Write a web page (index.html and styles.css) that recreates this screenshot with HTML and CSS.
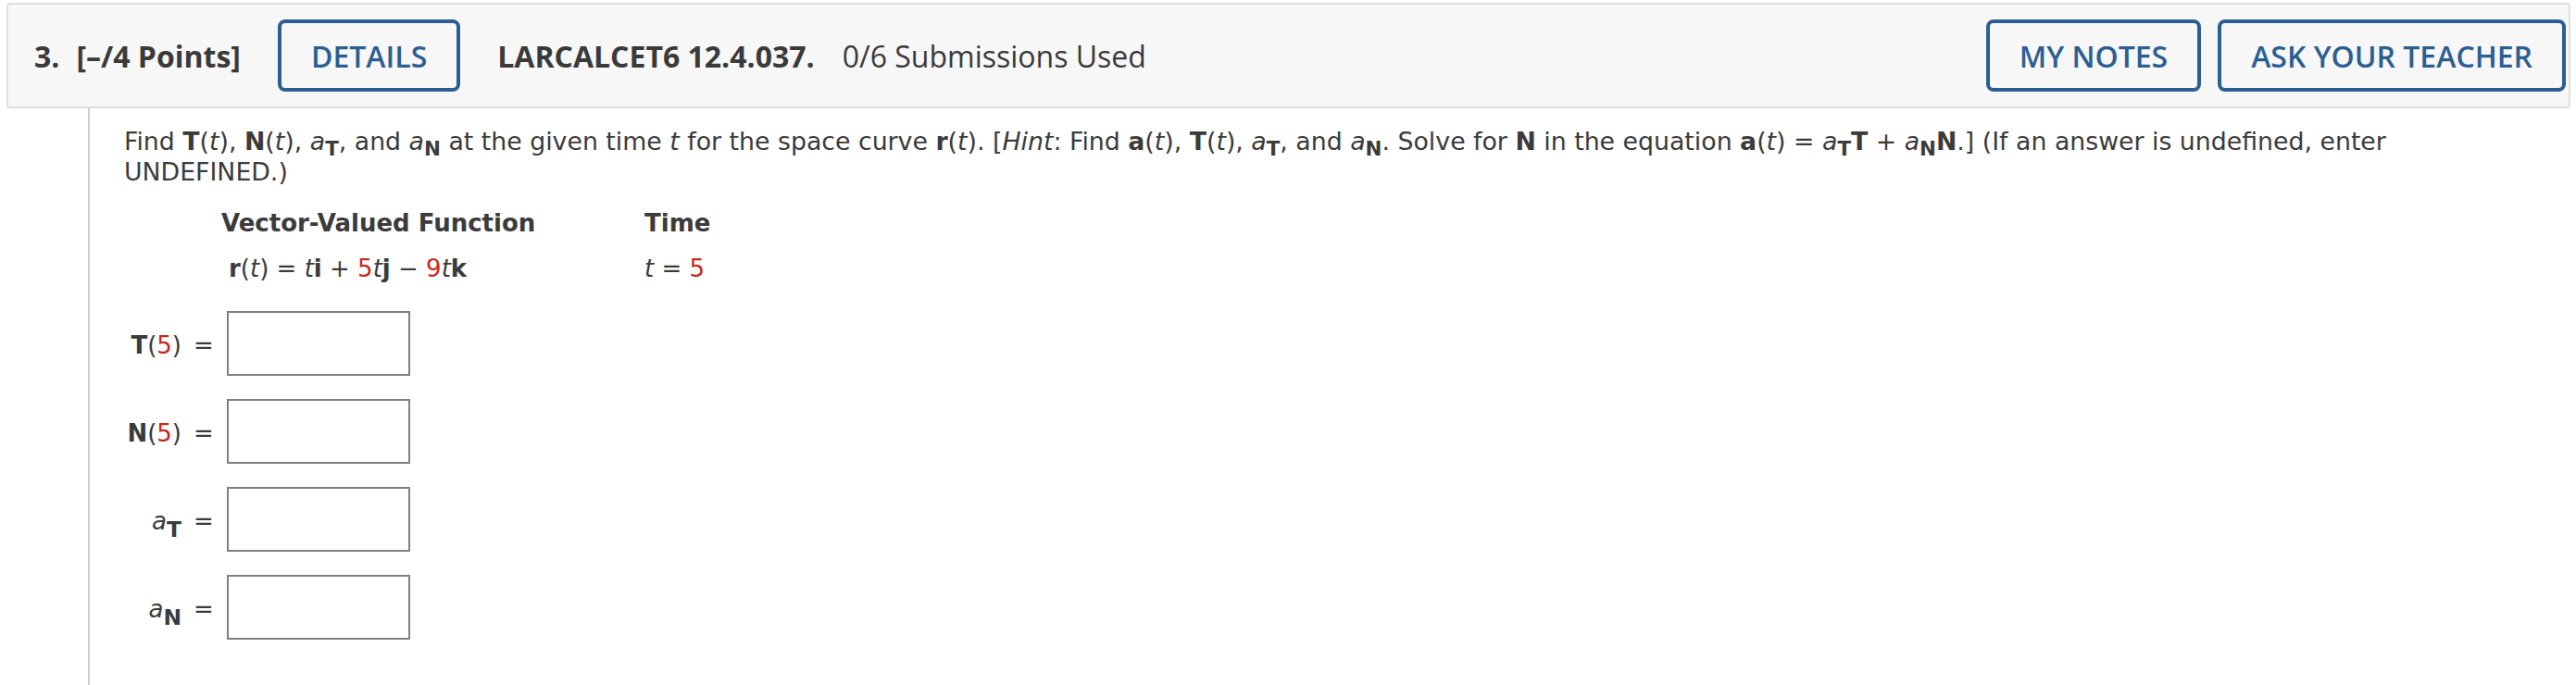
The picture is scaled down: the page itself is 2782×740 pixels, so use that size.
FILE: index.html
```html
<!DOCTYPE html>
<html lang="en">
<head>
<meta charset="utf-8">
<title>Question 3</title>
<link rel="stylesheet" href="styles.css">
</head>
<body>
<div class="question">
  <div class="q-header">
    <span class="q-num">3.</span>
    <span class="q-points">[–/4 Points]</span>
    <span class="btn btn-details">DETAILS</span>
    <span class="q-id">LARCALCET6 12.4.037.</span>
    <span class="q-subs">0/6 Submissions Used</span>
    <div class="q-actions">
      <span class="btn">MY NOTES</span>
      <span class="btn">ASK YOUR TEACHER</span>
    </div>
  </div>
  <div class="q-body">
    <p class="prompt">Find <b>T</b>(<i>t</i>), <b>N</b>(<i>t</i>), <i>a</i><sub>T</sub>, and <i>a</i><sub>N</sub> at the given time <i>t</i> for the space curve <b>r</b>(<i>t</i>). [<i>Hint</i>: Find <b>a</b>(<i>t</i>), <b>T</b>(<i>t</i>), <i>a</i><sub>T</sub>, and <i>a</i><sub>N</sub>. Solve for <b>N</b> in the equation <b>a</b>(<i>t</i>) = <i>a</i><sub>T</sub><b>T</b> + <i>a</i><sub>N</sub><b>N</b>.] (If an answer is undefined, enter UNDEFINED.)</p>
    <div class="vvf">
      <div class="vvf-head">Vector-Valued Function</div>
      <div class="vvf-head">Time</div>
      <div class="vvf-cell vvf-func"><b>r</b>(<i>t</i>) = <i>t</i><b>i</b> + <span class="red">5</span><i>t</i><b>j</b> − <span class="red">9</span><i>t</i><b>k</b></div>
      <div class="vvf-cell"><i>t</i> = <span class="red">5</span></div>
    </div>
    <div class="answers">
      <div class="ans-row">
        <span class="ans-label"><b>T</b>(<span class="red">5</span>)</span>
        <span class="ans-eq">=</span>
        <span class="ans-box"></span>
      </div>
      <div class="ans-row">
        <span class="ans-label"><b>N</b>(<span class="red">5</span>)</span>
        <span class="ans-eq">=</span>
        <span class="ans-box"></span>
      </div>
      <div class="ans-row">
        <span class="ans-label"><i>a</i><sub>T</sub></span>
        <span class="ans-eq">=</span>
        <span class="ans-box"></span>
      </div>
      <div class="ans-row">
        <span class="ans-label"><i>a</i><sub>N</sub></span>
        <span class="ans-eq">=</span>
        <span class="ans-box"></span>
      </div>
    </div>
  </div>
</div>
</body>
</html>
```
FILE: styles.css
```css
html, body {
  margin: 0;
  padding: 0;
  background: #ffffff;
}
body {
  height: 740px;
  overflow: hidden;
}
.question {
  padding: 3px 6px 0 7px;
}
.q-header {
  display: flex;
  align-items: center;
  height: 114px;
  box-sizing: border-box;
  background: #f7f7f7;
  border: 2px solid #e0e0e0;
  border-radius: 4px;
  padding: 0 3px 0 28px;
  font-family: "Open Sans", "Liberation Sans", sans-serif;
  font-size: 32px;
  color: #3a3a3a;
  white-space: nowrap;
}
.q-num {
  font-weight: 700;
}
.q-points {
  font-weight: 700;
  margin-left: 18px;
}
.btn {
  display: inline-flex;
  align-items: center;
  height: 78px;
  box-sizing: border-box;
  padding: 0 32px;
  border: 4px solid #2b5f93;
  border-radius: 8px;
  color: #2b5f93;
  font-weight: 600;
}
.btn-details {
  margin-left: 40px;
}
.q-id {
  font-weight: 700;
  margin-left: 40px;
}
.q-subs {
  margin-left: 30px;
}
.q-actions {
  margin-left: auto;
  display: flex;
  gap: 18px;
}
.q-body {
  margin-left: 88px;
  border-left: 2px solid #cccccc;
  min-height: 623px;
  padding: 19px 0 0 37px;
  font-family: "DejaVu Sans", Verdana, sans-serif;
  font-size: 26px;
  line-height: 31.6px;
  color: #3b3b3b;
}
.prompt {
  margin: 0;
  max-width: 2550px;
  font-size: 26.75px;
  line-height: 33px;
}
.prompt sub {
  font-weight: 700;
  font-size: 0.8em;
  vertical-align: -6px;
  line-height: 0;
}
.red {
  color: #c8281e;
}
.vvf {
  display: grid;
  grid-template-columns: 457px auto;
  margin: 15px 0 0 105px;
}
.vvf-head {
  font-weight: 700;
  padding: 8.7px 0;
}
.vvf-cell {
  padding: 8.7px 0;
}
.vvf-func {
  padding-left: 8px;
}
.answers {
  display: flex;
  flex-direction: column;
  gap: 25px;
  margin-top: 21px;
}
.ans-row {
  display: flex;
  align-items: center;
}
.ans-label {
  width: 62px;
  text-align: right;
  white-space: nowrap;
  margin-top: 6px;
}
.ans-label sub {
  font-weight: 700;
  font-size: 0.9em;
  vertical-align: -8px;
  line-height: 0;
}
.ans-eq {
  margin-left: 13px;
  margin-top: 6px;
}
.ans-box {
  width: 198px;
  height: 70px;
  box-sizing: border-box;
  border: 2px solid #808080;
  margin-left: 14px;
  background: #ffffff;
}
```
